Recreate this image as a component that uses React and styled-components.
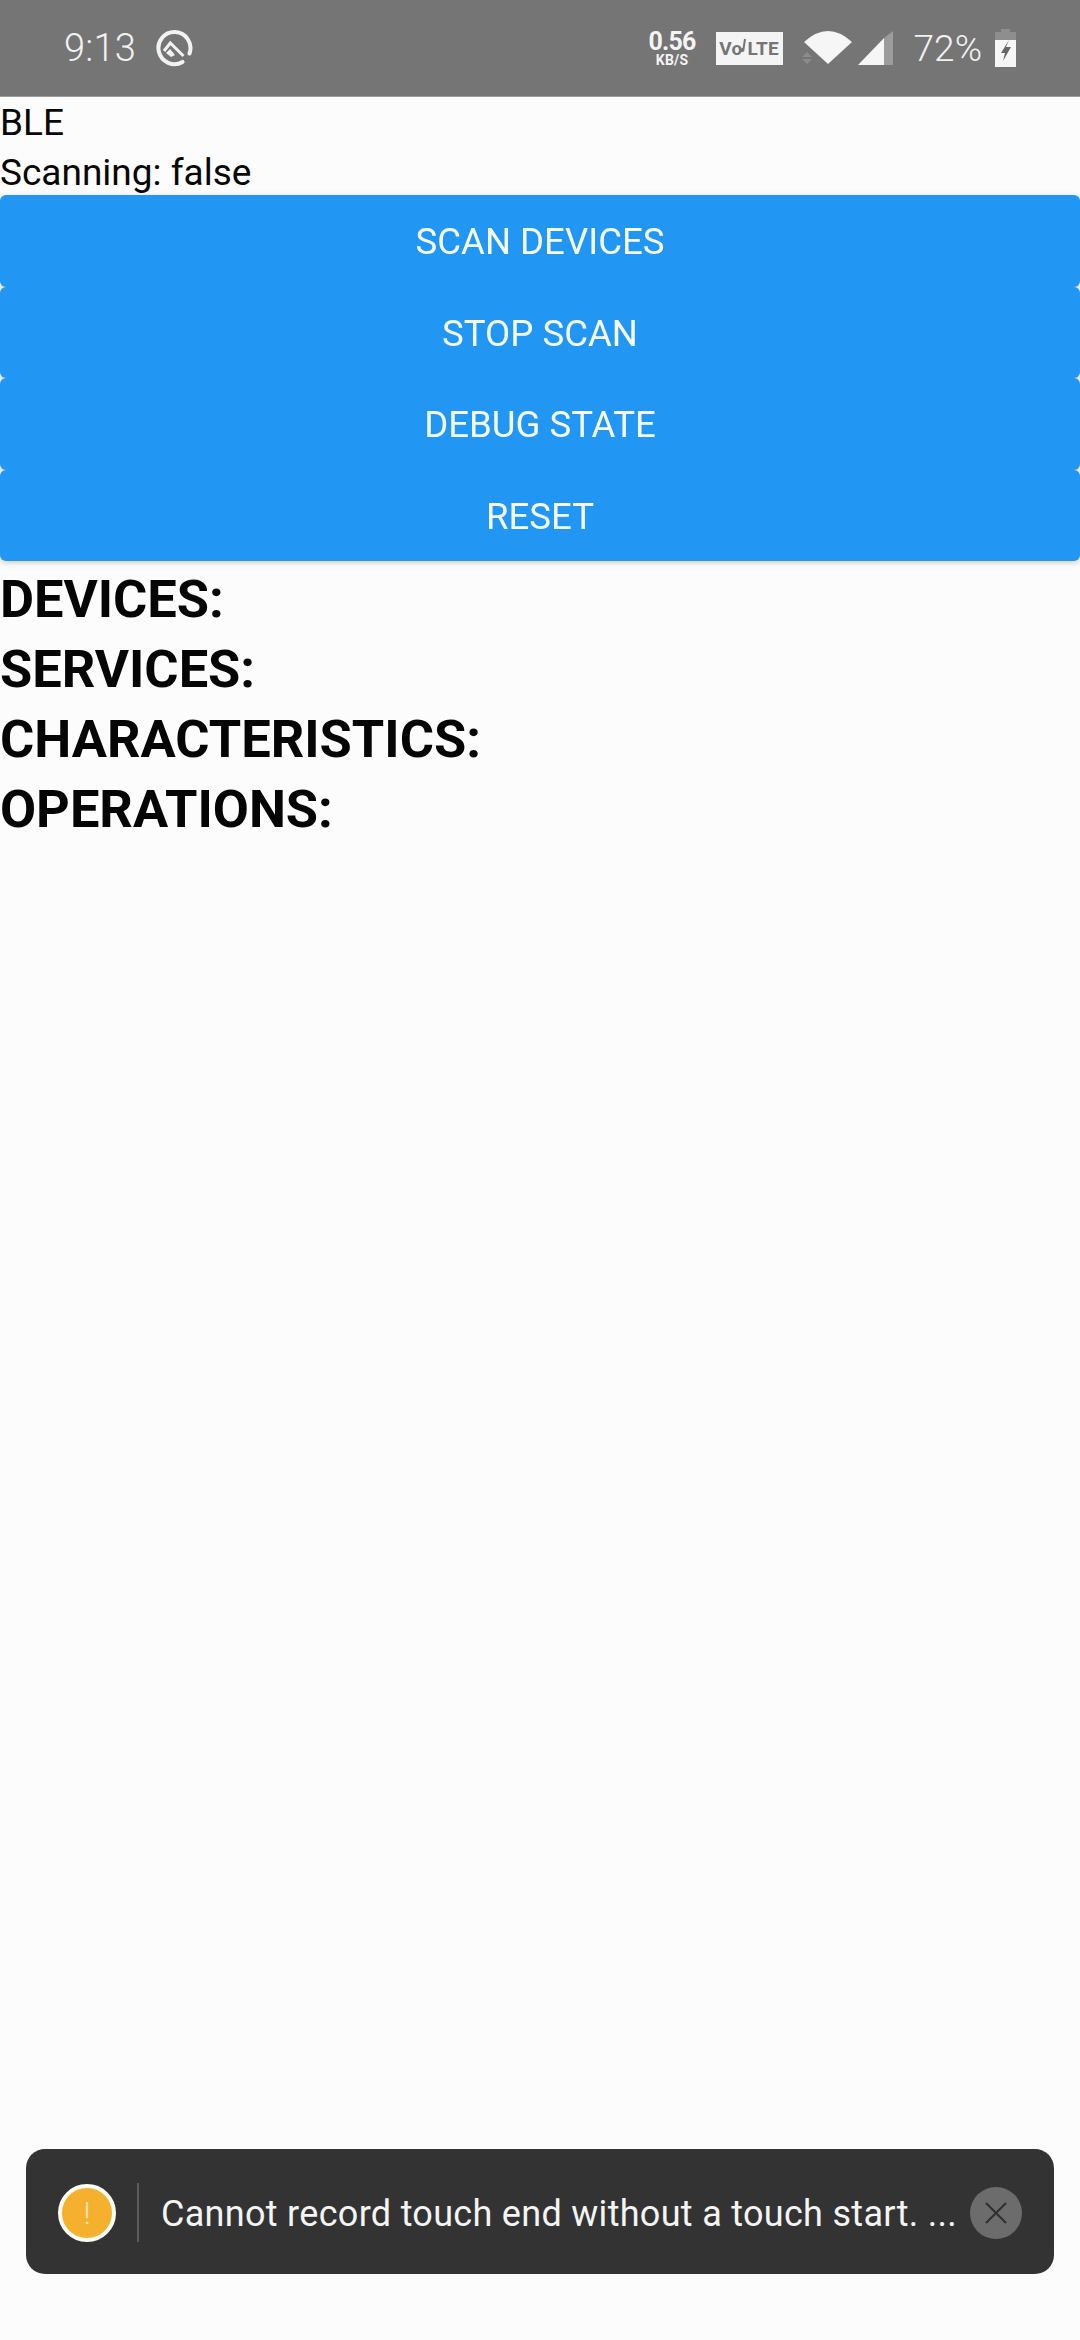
import React from "react";
import styled, { createGlobalStyle } from "styled-components";

const Global = createGlobalStyle`
  html, body { margin: 0; padding: 0; background: #fcfcfc; }
  body { font-family: Roboto, "Liberation Sans", sans-serif; }
`;

const Screen = styled.div`
  position: relative;
  width: 1080px;
  height: 2340px;
  overflow: hidden;
  background: #fcfcfc;
  color: #080808;
`;

const StatusBar = styled.div`
  display: flex;
  align-items: center;
  justify-content: space-between;
  height: 97px;
  padding: 0 64px 0 64px;
  box-sizing: border-box;
  background: #757575;
  color: #f2f2f2;
  border-bottom: 1px solid #9a9a9a;
`;

const StatusGroup = styled.div`
  display: flex;
  align-items: center;
`;

const Clock = styled.span`
  font-size: 38px;
  line-height: 1;
  font-weight: 300;
  letter-spacing: 0.2px;
  margin-right: 20px;
`;

const Speed = styled.div`
  display: flex;
  flex-direction: column;
  align-items: center;
  width: 47px;
  margin-right: 20px;
  font-weight: 700;
  color: #f4f4f4;
`;

const SpeedValue = styled.span`
  font-size: 25px;
  line-height: 25px;
  letter-spacing: -0.8px;
`;

const SpeedUnit = styled.span`
  font-size: 14px;
  line-height: 13px;
  letter-spacing: 0.2px;
`;

const Volte = styled.span`
  display: flex;
  align-items: center;
  justify-content: center;
  width: 67px;
  height: 33px;
  margin-right: 11px;
  background: #f4f4f4;
  color: #757575;
  font-size: 19px;
  font-weight: 700;
  letter-spacing: 0.3px;
`;

const Percent = styled.span`
  font-size: 37px;
  line-height: 1;
  font-weight: 300;
  margin: 0 13px 0 21px;
`;

const Content = styled.main`
  display: flex;
  flex-direction: column;
  padding-top: 1px;
`;

const Line = styled.div`
  font-size: 37px;
  line-height: 49.5px;
  height: 49.5px;
`;

const Buttons = styled.div`
  display: flex;
  flex-direction: column;
  margin-top: -2px;
  margin-bottom: 3px;
  filter: drop-shadow(0 2px 3px rgba(0, 0, 0, 0.18));
`;

const Action = styled.button`
  display: block;
  width: 1080px;
  height: 91.5px;
  padding: 2px 0 0;
  border: 0;
  border-radius: 6px;
  background: #2196f3;
  color: #f6fbff;
  font-family: inherit;
  font-size: 36.6px;
  font-weight: 400;
  text-align: center;
`;

const Heading = styled.div`
  font-size: 52.4px;
  line-height: 70px;
  font-weight: 700;
  color: #050505;
`;

const Toast = styled.div`
  position: absolute;
  left: 26px;
  top: 2149px;
  display: flex;
  align-items: center;
  width: 1028px;
  height: 125px;
  box-sizing: border-box;
  padding: 2px 32px 0;
  border-radius: 19px;
  background: #333333;
  color: #f4f4f4;
`;

const Badge = styled.span`
  display: flex;
  align-items: center;
  justify-content: center;
  flex: none;
  width: 58px;
  height: 58px;
  box-sizing: border-box;
  border: 4px solid #fdfdf6;
  border-radius: 50%;
  background: #f5b02e;
  color: #fbe7b8;
  font-size: 32px;
  font-weight: 300;
`;

const Divider = styled.span`
  flex: none;
  width: 2px;
  height: 59px;
  margin: 0 22px 0 21px;
  background: #5c5c5c;
`;

const Message = styled.span`
  flex: 1;
  padding-top: 2px;
  font-size: 36px;
  white-space: nowrap;
  letter-spacing: 0.3px;
`;

const CloseButton = styled.span`
  display: flex;
  align-items: center;
  justify-content: center;
  flex: none;
  width: 52px;
  height: 52px;
  border-radius: 50%;
  background: #6c6c6c;
`;

const FocusIcon = () => (
  <svg width="38" height="38" viewBox="0 0 38 38" fill="none">
    <path d="M26.500 32.900A16 16 0 1 1 33.500 24.500" stroke="#f2f2f2" strokeWidth="4" strokeLinecap="round" />
    <path d="M8 22L14.300 14L27.500 27" stroke="#f2f2f2" strokeWidth="3" />
    <path d="M10 24L14 20L19 26L15 28Z" fill="#f2f2f2" />
  </svg>
);

const NoteIcon = () => (
  <svg width="7" height="20" viewBox="0 0 7 20" fill="none" style={{ margin: "0 0 0 -2px" }}>
    <path d="M5 1L3.500 11" stroke="#757575" strokeWidth="2" />
    <circle cx="2.500" cy="12" r="2" fill="#757575" />
  </svg>
);

const WifiIcon = () => (
  <svg width="59" height="34" viewBox="0 0 59 34" style={{ marginRight: 5 }}>
    <path d="M8 26L13 21L18 26ZM8 28L13 33L18 28Z" fill="#8b8b8b" />
    <path d="M10 11Q34 -11 58 11L34 33Z" fill="#f6f6f6" />
  </svg>
);

const SignalIcon = () => (
  <svg width="35" height="34" viewBox="0 0 35 34">
    <path d="M35 0V34H26V7Z" fill="#9c9c9c" />
    <path d="M26 7V34H0Z" fill="#f6f6f6" />
  </svg>
);

const BatteryIcon = () => (
  <svg width="21" height="38" viewBox="0 0 21 38">
    <path d="M6 0H15V3H21V11H0V3H6Z" fill="#8e8e8e" />
    <path d="M0 11H21V38H0Z" fill="#f6f6f6" />
    <path d="M14 11L6 24H10L8 32L16 18H11Z" fill="#666" />
  </svg>
);

const CloseIcon = () => (
  <svg width="24" height="24" viewBox="0 0 24 24" stroke="#2f2f2f" strokeWidth="2" fill="none">
    <path d="M2 2L22 22M22 2L2 22" />
  </svg>
);

const actions = ["SCAN DEVICES", "STOP SCAN", "DEBUG STATE", "RESET"];
const headings = ["DEVICES:", "SERVICES:", "CHARACTERISTICS:", "OPERATIONS:"];

export default function App() {
  return (
    <Screen>
      <Global />
      <StatusBar>
        <StatusGroup>
          <Clock>9:13</Clock>
          <FocusIcon />
        </StatusGroup>
        <StatusGroup>
          <Speed>
            <SpeedValue>0.56</SpeedValue>
            <SpeedUnit>KB/S</SpeedUnit>
          </Speed>
          <Volte>
            Vo
            <NoteIcon />
            LTE
          </Volte>
          <WifiIcon />
          <SignalIcon />
          <Percent>72%</Percent>
          <BatteryIcon />
        </StatusGroup>
      </StatusBar>
      <Content>
        <Line>BLE</Line>
        <Line>Scanning: false</Line>
        <Buttons>
          {actions.map((a) => (
            <Action key={a}>{a}</Action>
          ))}
        </Buttons>
        {headings.map((h) => (
          <Heading key={h}>{h}</Heading>
        ))}
      </Content>
      <Toast>
        <Badge>!</Badge>
        <Divider />
        <Message>Cannot record touch end without a touch start. ...</Message>
        <CloseButton>
          <CloseIcon />
        </CloseButton>
      </Toast>
    </Screen>
  );
}
